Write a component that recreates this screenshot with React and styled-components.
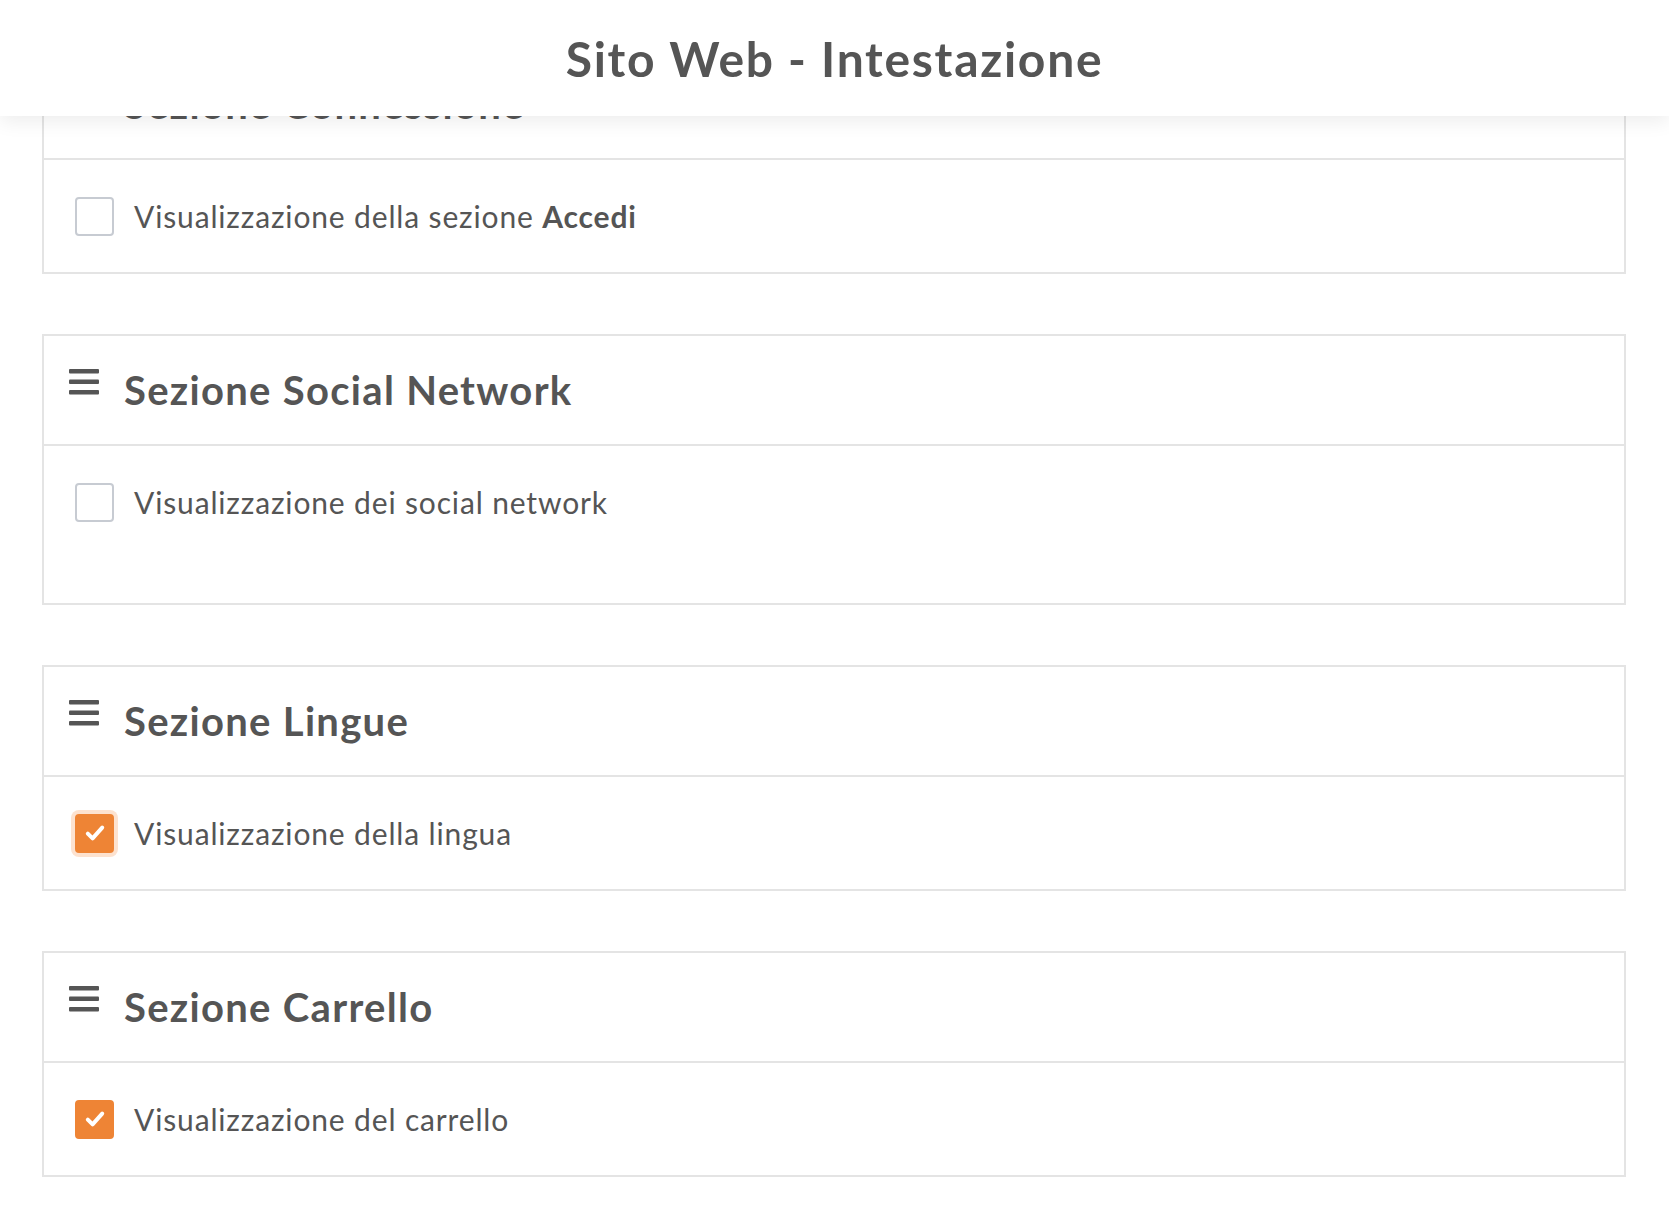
import React from "react";
import styled, { createGlobalStyle, css } from "styled-components";

const sections = [
  { id: "connessione", title: "Sezione Connessione", label: ["Visualizzazione della sezione ", "Accedi"], checked: false },
  { id: "social", title: "Sezione Social Network", label: ["Visualizzazione dei social network"], checked: false, tall: true },
  { id: "lingue", title: "Sezione Lingue", label: ["Visualizzazione della lingua"], checked: true, focused: true },
  { id: "carrello", title: "Sezione Carrello", label: ["Visualizzazione del carrello"], checked: true },
];

const App = () => {
  return (
    <>
      <GlobalStyle />
      <SHeader>
        <STitle>Sito Web - Intestazione</STitle>
      </SHeader>
      <SMain>
        {sections.map(section => {
          return (
            <SCard key={section.id}>
              <SCardHeader>
                <SDragIcon viewBox="0 0 30 26" aria-hidden="true">
                  <rect x="0" y="0" width="30" height="4.5" rx="1" />
                  <rect x="0" y="10.5" width="30" height="4.5" rx="1" />
                  <rect x="0" y="21" width="30" height="4.5" rx="1" />
                </SDragIcon>
                <SCardTitle>{section.title}</SCardTitle>
              </SCardHeader>
              <SCardBody $tall={section.tall}>
                <SOption>
                  <SCheckbox $checked={section.checked} $focused={section.focused}>
                    {section.checked && (
                      <svg viewBox="0 0 20 20" width="24" height="24" aria-hidden="true">
                        <polyline
                          points="4,10.5 8,14.5 16,5.5"
                          fill="none"
                          stroke="#fff"
                          strokeWidth="3.3"
                          strokeLinecap="round"
                          strokeLinejoin="round"
                        />
                      </svg>
                    )}
                  </SCheckbox>
                  <SLabel>
                    {section.label[0]}
                    {section.label[1] && <b>{section.label[1]}</b>}
                  </SLabel>
                </SOption>
              </SCardBody>
            </SCard>
          );
        })}
      </SMain>
    </>
  );
};

const GlobalStyle = createGlobalStyle`
  html, body {
    margin: 0;
    padding: 0;
    background: #ffffff;
    font-family: Lato, "Open Sans", "Liberation Sans", sans-serif;
    color: #555555;
  }
  * { box-sizing: border-box; }
`;

const SHeader = styled.header`
  position: fixed;
  top: 0;
  left: 0;
  right: 0;
  height: 116px;
  background: #ffffff;
  display: flex;
  align-items: center;
  justify-content: center;
  box-shadow: 0 6px 18px rgba(0, 0, 0, 0.07);
  z-index: 10;
`;

const STitle = styled.h1`
  margin: 0;
  font-size: 48px;
  font-weight: 700;
  color: #555555;
  letter-spacing: 1.7px;
`;

const SMain = styled.main`
  display: flex;
  flex-direction: column;
  gap: 60px;
  padding: 48px 43px 60px 42px;
`;

const SCard = styled.section`
  border: 2px solid #e4e4e4;
  background: #ffffff;
`;

const SCardHeader = styled.div`
  height: 110px;
  border-bottom: 2px solid #e4e4e4;
  display: flex;
  align-items: center;
  padding-left: 25px;
  gap: 25px;
`;

const SDragIcon = styled.svg`
  width: 30px;
  height: 26px;
  fill: #555555;
  flex-shrink: 0;
  margin-top: -16px;
`;

const SCardTitle = styled.h2`
  margin: 0;
  font-size: 40px;
  font-weight: 700;
  color: #555555;
  letter-spacing: 1.3px;
`;

const SCardBody = styled.div`
  padding: 36px 31px;
  ${props =>
    props.$tall &&
    css`
      padding-bottom: 81px;
    `}
`;

const SOption = styled.label`
  display: flex;
  align-items: center;
  gap: 20px;
  height: 40px;
`;

const SCheckbox = styled.span`
  width: 39px;
  height: 39px;
  border-radius: 4px;
  border: 2px solid #c7cbd2;
  background: #ffffff;
  display: flex;
  align-items: center;
  justify-content: center;
  flex-shrink: 0;
  ${props =>
    props.$checked &&
    css`
      border-color: #ee8435;
      background: #ee8435;
    `}
  ${props =>
    props.$focused &&
    css`
      box-shadow: 0 0 0 4px #fde2cf;
    `}
`;

const SLabel = styled.span`
  font-size: 30px;
  color: #555555;
  letter-spacing: 0.85px;
  b {
    font-weight: 700;
  }
`;

export default App;
